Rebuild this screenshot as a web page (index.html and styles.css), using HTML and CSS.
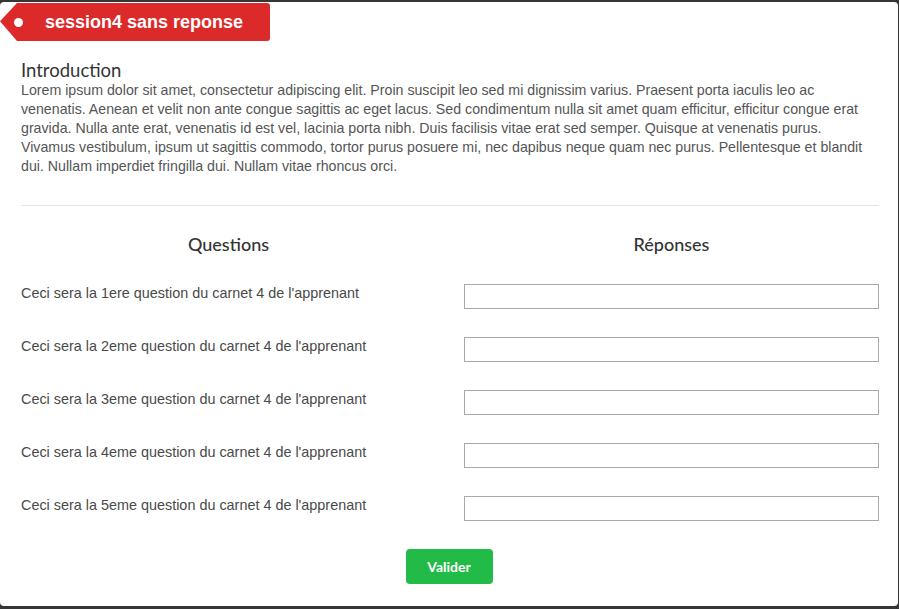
FILE: index.html
```html
<!DOCTYPE html>
<html lang="fr">
<head>
<meta charset="utf-8">
<title>session4 sans reponse</title>
<link rel="stylesheet" href="styles.css">
</head>
<body>
<div class="modal">
  <div class="tag"><span class="tag-dot"></span><span class="tag-text">session4 sans reponse</span></div>
  <div class="content">
    <h4 class="intro-title">Introduction</h4>
    <p class="intro-text">Lorem ipsum dolor sit amet, consectetur adipiscing elit. Proin suscipit leo sed mi dignissim varius. Praesent porta iaculis leo ac venenatis. Aenean et velit non ante congue sagittis ac eget lacus. Sed condimentum nulla sit amet quam efficitur, efficitur congue erat gravida. Nulla ante erat, venenatis id est vel, lacinia porta nibh. Duis facilisis vitae erat sed semper. Quisque at venenatis purus. Vivamus vestibulum, ipsum ut sagittis commodo, tortor purus posuere mi, nec dapibus neque quam nec purus. Pellentesque et blandit dui. Nullam imperdiet fringilla dui. Nullam vitae rhoncus orci.</p>
    <hr class="sep">
    <div class="qa">
      <div class="qa-head">Questions</div>
      <div class="qa-head">Réponses</div>
      <div class="q">Ceci sera la 1ere question du carnet 4 de l'apprenant</div>
      <input class="a" type="text">
      <div class="q">Ceci sera la 2eme question du carnet 4 de l'apprenant</div>
      <input class="a" type="text">
      <div class="q">Ceci sera la 3eme question du carnet 4 de l'apprenant</div>
      <input class="a" type="text">
      <div class="q">Ceci sera la 4eme question du carnet 4 de l'apprenant</div>
      <input class="a" type="text">
      <div class="q">Ceci sera la 5eme question du carnet 4 de l'apprenant</div>
      <input class="a" type="text">
    </div>
    <div class="actions"><button class="btn" type="button">Valider</button></div>
  </div>
</div>
</body>
</html>
```

FILE: styles.css
```css
html, body {
  margin: 0;
  padding: 0;
}
body {
  background: #363636;
  height: 609px;
  overflow: hidden;
  padding-top: 2px;
  box-sizing: border-box;
}
.modal {
  width: 898px;
  height: 604px;
  box-sizing: border-box;
  background: #fff;
  border-radius: 4px;
  padding-top: 1px;
}
.tag {
  width: 270px;
  height: 38px;
  box-sizing: border-box;
  background: #dc2a2b;
  border-radius: 0 3px 3px 0;
  clip-path: polygon(0 48%, 17px 0, 100% 0, 100% 100%, 17px 100%);
  display: flex;
  align-items: center;
  padding-left: 14px;
}
.tag-dot {
  width: 9px;
  height: 9px;
  border-radius: 50%;
  background: #fff;
  flex: none;
}
.tag-text {
  margin-left: 22px;
  color: #fff;
  font-family: "Liberation Sans", Arial, sans-serif;
  font-weight: bold;
  font-size: 18px;
  line-height: 20px;
}
.content {
  padding: 19px 19px 0 21px;
}
.intro-title {
  margin: 0;
  font-family: Lato, "Liberation Sans", sans-serif;
  font-weight: normal;
  font-size: 18.5px;
  line-height: 20px;
  color: #333;
}
.intro-text {
  margin: 1px 0 0;
  font-family: "Liberation Sans", Arial, sans-serif;
  font-size: 14.2px;
  line-height: 19px;
  color: #555;
}
.sep {
  margin: 29px 0 0;
  border: 0;
  border-top: 1px solid #e5e5e5;
  height: 0;
}
.qa {
  display: grid;
  grid-template-columns: 1fr 1fr;
  column-gap: 28px;
  row-gap: 28px;
  margin-top: 28px;
}
.qa-head {
  text-align: center;
  font-family: Lato, "Liberation Sans", sans-serif;
  font-weight: 500;
  font-size: 18px;
  line-height: 20px;
  color: #333;
  margin-bottom: 2px;
}
.q {
  font-family: "Liberation Sans", Arial, sans-serif;
  font-size: 14.4px;
  line-height: 17px;
  padding-top: 1px;
  color: #4a4a4a;
}
.a {
  display: block;
  width: 100%;
  height: 25px;
  box-sizing: border-box;
  margin: 0;
  border: 1px solid #a9a9a9;
  border-radius: 0;
  background: #fff;
  padding: 2px 6px;
  font-family: "Liberation Sans", Arial, sans-serif;
  font-size: 13px;
  outline: none;
}
.actions {
  display: flex;
  justify-content: center;
  margin-top: 28px;
  padding-right: 2px;
}
.btn {
  width: 87px;
  height: 35px;
  border: 0;
  border-radius: 4px;
  background: #22bb48;
  color: #fff;
  font-family: Lato, "Liberation Sans", sans-serif;
  font-weight: bold;
  font-size: 14px;
  cursor: pointer;
}
```
